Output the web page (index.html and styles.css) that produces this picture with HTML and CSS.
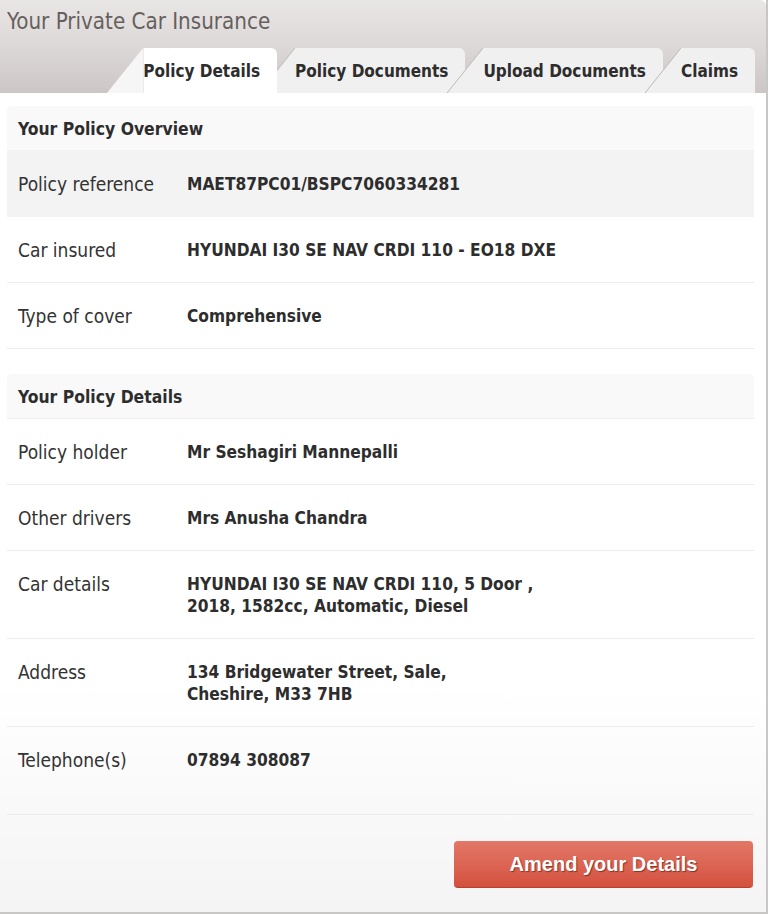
FILE: index.html
```html
<!DOCTYPE html>
<html lang="en">
<head>
<meta charset="utf-8">
<title>Your Private Car Insurance</title>
<link rel="stylesheet" href="styles.css">
</head>
<body>
<div class="page">
  <header class="top">
    <h1 class="title">Your Private Car Insurance</h1>
    <nav class="tabs">
      <a class="tab active">Policy Details</a>
      <a class="tab">Policy Documents</a>
      <a class="tab">Upload Documents</a>
      <a class="tab">Claims</a>
    </nav>
  </header>
  <main class="panel">
    <section class="box">
      <h2 class="box-head">Your Policy Overview</h2>
      <div class="row shaded"><span class="label">Policy reference</span><span class="value">MAET87PC01/BSPC7060334281</span></div>
      <div class="row"><span class="label">Car insured</span><span class="value">HYUNDAI I30 SE NAV CRDI 110 - EO18 DXE</span></div>
      <div class="row"><span class="label">Type of cover</span><span class="value">Comprehensive</span></div>
    </section>
    <section class="box">
      <h2 class="box-head">Your Policy Details</h2>
      <div class="row"><span class="label">Policy holder</span><span class="value">Mr Seshagiri Mannepalli</span></div>
      <div class="row"><span class="label">Other drivers</span><span class="value">Mrs Anusha Chandra</span></div>
      <div class="row"><span class="label">Car details</span><span class="value">HYUNDAI I30 SE NAV CRDI 110, 5 Door ,<br>2018, 1582cc, Automatic, Diesel</span></div>
      <div class="row"><span class="label">Address</span><span class="value">134 Bridgewater Street, Sale,<br>Cheshire, M33 7HB</span></div>
      <div class="row tall"><span class="label">Telephone(s)</span><span class="value">07894 308087</span></div>
    </section>
    <div class="actions">
      <button class="amend" type="button">Amend your Details</button>
    </div>
  </main>
</div>
</body>
</html>
```
FILE: styles.css
```css
* { box-sizing: border-box; }
html, body { margin: 0; padding: 0; background: #fff; }
body {
  font-family: "DejaVu Sans Condensed", "DejaVu Sans", sans-serif;
  font-stretch: condensed;
  color: #333;
}
.page {
  width: 768px;
  height: 914px;
  border-right: 2px solid #c9c6c6;
  border-bottom: 2px solid #c9c6c6;
  display: flex;
  flex-direction: column;
}
.top {
  background: linear-gradient(to bottom, #e9e6e6 0%, #dcd8d7 50%, #ccc7c6 100%);
  border-top-right-radius: 6px;
}
.title {
  margin: 0;
  padding: 8px 0 0 7px;
  height: 48px;
  font-size: 22.2px;
  font-weight: normal;
  line-height: 26px;
  color: #665f5d;
}
.tabs {
  display: flex;
  justify-content: flex-end;
  gap: 18px;
  padding-right: 11px;
  height: 45px;
}
.tab {
  position: relative;
  display: flex;
  align-items: center;
  padding: 1px 17px 1px 0;
  background: #f1f0f0;
  border-top-right-radius: 6px;
  font-size: 17px;
  font-weight: bold;
  color: #2d2d2d;
  white-space: nowrap;
}
.tab::before {
  content: "";
  position: absolute;
  right: 100%;
  bottom: 0;
  width: 36px;
  height: 100%;
  background: linear-gradient(to top left, #f1f0f0 calc(50% - 0.8px), #bdb9b9 50%, rgba(0,0,0,0) calc(50% + 0.8px));
}
.tab.active {
  z-index: 2;
  background: #fff;
  box-shadow: inset 1px 0 0 #ebe9e9;
}
.tab.active::before {
  background: linear-gradient(to top left, #f7f6f6 calc(50% - 0.6px), #e4e1e1 50%, rgba(0,0,0,0) calc(50% + 0.6px));
}
.panel {
  flex: 1;
  display: flex;
  flex-direction: column;
  padding: 13px 12px 0 7px;
  background: linear-gradient(to bottom, #fff 0%, #fff 72%, #f4f4f4 100%);
}
.box {
  display: flex;
  flex-direction: column;
}
.box + .box { margin-top: 25px; }
.box-head {
  margin: 0;
  height: 45px;
  padding: 2px 11px 0;
  display: flex;
  align-items: center;
  background: #f9f9f9;
  border-radius: 5px 5px 0 0;
  border-bottom: 1px solid #efefef;
  font-size: 17.4px;
  font-weight: bold;
  color: #2d2d2d;
}
.box .box-head + .row.shaded { margin-top: -1px; }
.row {
  display: grid;
  grid-template-columns: 169px 1fr;
  padding: 22px 11px 21px;
  line-height: 22px;
  border-bottom: 1px solid #ececec;
}
.row.shaded { background: #f3f3f3; border-bottom-color: #f3f3f3; padding-top: 23px; }
.row.tall { padding-bottom: 43px; }
.label {
  font-size: 19px;
  color: #333;
}
.value {
  font-size: 17.2px;
  font-weight: bold;
  color: #2d2d2d;
}
.actions {
  display: flex;
  justify-content: flex-end;
  padding: 26px 1px 0 0;
}
.amend {
  width: 299px;
  height: 47px;
  border: none;
  border-bottom: 1px solid #b9402f;
  border-radius: 4px;
  background: linear-gradient(to bottom, #e27767 0%, #dc6554 50%, #d3503e 100%);
  font-family: "Liberation Sans", Arial, sans-serif;
  font-weight: bold;
  font-size: 20px;
  color: #fff;
  text-shadow: 1px 1px 1px rgba(80, 20, 10, 0.6);
  cursor: pointer;
}
```
